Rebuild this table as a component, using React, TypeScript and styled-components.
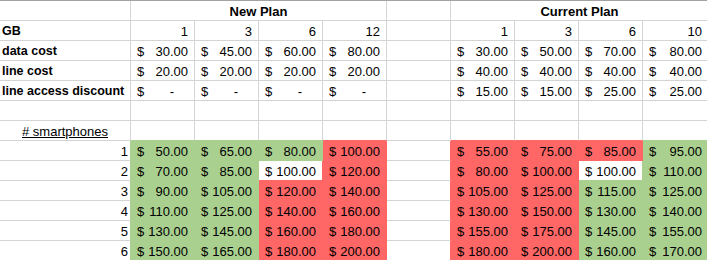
import React from "react";
import styled, { createGlobalStyle, css } from "styled-components";

const GRID = "#d4d4d4";
const FILLS: Record<string, string> = { g: "#a9d08e", r: "#ff6666", w: "#ffffff" };

const GlobalStyle = createGlobalStyle`
  html, body { margin: 0; padding: 0; background: #ffffff; }
  body { overflow: hidden; font-family: "Liberation Sans", Arial, sans-serif; color: #000; }
`;

const Sheet = styled.div`
  display: grid;
  grid-template-columns: 131px repeat(8, 64px) 66px;
  grid-auto-rows: 20px;
  width: 709px;
  border-top: 1px solid #a3a3a3;
`;

type Align = "left" | "right" | "center";

const Cell = styled.div<{
  $align: Align;
  $bold?: boolean;
  $size?: number;
  $fill?: string;
  $right: string;
  $bottom: string;
  $span: number;
  $padR?: number;
  $padL?: number;
  $acct?: boolean;
}>`
  box-sizing: border-box;
  grid-column: span ${(p) => p.$span};
  border-right: 1px solid ${(p) => p.$right};
  border-bottom: 1px solid ${(p) => p.$bottom};
  background: ${(p) => p.$fill || "transparent"};
  padding: 2px ${(p) => p.$padR ?? 2}px 0 ${(p) => p.$padL ?? 2}px;
  line-height: 17px;
  font-size: ${(p) => p.$size ?? 13}px;
  font-weight: ${(p) => (p.$bold ? 700 : 400)};
  text-align: ${(p) => p.$align};
  white-space: nowrap;
  overflow: hidden;
  ${(p) =>
    p.$acct &&
    css`
      display: flex;
      justify-content: space-between;
    `}
`;

const Underlined = styled.span`
  text-decoration: underline;
  text-underline-offset: 1px;
`;

const Sym = styled.span``;
const Num = styled.span``;
const Dash = styled.span`
  padding-right: 14px;
`;

type Spec = {
  kind: "empty" | "text" | "num" | "acct" | "dash" | "header" | "under";
  text?: string;
  fill?: "g" | "r" | "w";
  span?: number;
  bold?: boolean;
  align?: Align;
  padR?: number;
};

const E: Spec = { kind: "empty" };
const label = (t: string): Spec => ({ kind: "text", text: t, bold: true, align: "left" });
const num = (n: number): Spec => ({ kind: "num", text: String(n), align: "right", padR: 6 });
const acct = (n: number, fill?: "g" | "r" | "w"): Spec => ({
  kind: "acct",
  text: n.toFixed(2),
  fill,
});
const dash: Spec = { kind: "dash" };

const newPlan = [
  [[50, "g"], [65, "g"], [80, "g"], [100, "r"]],
  [[70, "g"], [85, "g"], [100, "w"], [120, "r"]],
  [[90, "g"], [105, "g"], [120, "r"], [140, "r"]],
  [[110, "g"], [125, "g"], [140, "r"], [160, "r"]],
  [[130, "g"], [145, "g"], [160, "r"], [180, "r"]],
  [[150, "g"], [165, "g"], [180, "r"], [200, "r"]],
] as [number, "g" | "r" | "w"][][];

const curPlan = [
  [[55, "r"], [75, "r"], [85, "r"], [95, "g"]],
  [[80, "r"], [100, "r"], [100, "w"], [110, "g"]],
  [[105, "r"], [125, "r"], [115, "g"], [125, "g"]],
  [[130, "r"], [150, "r"], [130, "g"], [140, "g"]],
  [[155, "r"], [175, "r"], [145, "g"], [155, "g"]],
  [[180, "r"], [200, "r"], [160, "g"], [170, "g"]],
] as [number, "g" | "r" | "w"][][];

const rows: Spec[][] = [
  [
    E,
    { kind: "header", text: "New Plan", span: 4, bold: true, align: "center" },
    E,
    { kind: "header", text: "Current Plan", span: 4, bold: true, align: "center" },
  ],
  [label("GB"), num(1), num(3), num(6), num(12), E, num(1), num(3), num(6), num(10)],
  [label("data cost"), acct(30), acct(45), acct(60), acct(80), E, acct(30), acct(50), acct(70), acct(80)],
  [label("line cost"), acct(20), acct(20), acct(20), acct(20), E, acct(40), acct(40), acct(40), acct(40)],
  [label("line access discount"), dash, dash, dash, dash, E, acct(15), acct(15), acct(25), acct(25)],
  [E, E, E, E, E, E, E, E, E, E],
  [{ kind: "under", text: "# smartphones", align: "center" }, E, E, E, E, E, E, E, E, E],
  ...newPlan.map((np, i) => [
    { kind: "num", text: String(i + 1), align: "right", padR: 2 } as Spec,
    ...np.map(([v, f]) => acct(v, f)),
    E,
    ...curPlan[i].map(([v, f]) => acct(v, f)),
  ]),
];

// map each row to column positions
const colMaps = rows.map((row) => {
  const map: (Spec | null)[] = [];
  row.forEach((s) => {
    const span = s.span ?? 1;
    for (let k = 0; k < span; k++) map.push(s);
  });
  return map;
});

const strongFill = (s?: Spec | null) =>
  s && (s.fill === "g" || s.fill === "r") ? FILLS[s.fill] : null;

function renderContent(s: Spec) {
  switch (s.kind) {
    case "acct":
      return (
        <>
          <Sym>$</Sym>
          <Num>{s.text}</Num>
        </>
      );
    case "dash":
      return (
        <>
          <Sym>$</Sym>
          <Dash>-</Dash>
        </>
      );
    case "under":
      return <Underlined>{s.text}</Underlined>;
    case "empty":
      return null;
    default:
      return s.text;
  }
}

export default function App() {
  return (
    <>
      <GlobalStyle />
      <Sheet>
        {rows.map((row, r) => {
          let col = 0;
          return row.map((s, i) => {
            const span = s.span ?? 1;
            const c = col;
            col += span;
            const own = strongFill(s);
            const rightN = colMaps[r][c + span];
            const bottomN = colMaps[r + 1]?.[c];
            const right = own || strongFill(rightN) || GRID;
            const bottom = own || strongFill(bottomN) || GRID;
            const isAcct = s.kind === "acct" || s.kind === "dash";
            return (
              <Cell
                key={`${r}-${i}`}
                $span={span}
                $align={s.align ?? "left"}
                $bold={s.bold}
                $size={s.kind === "text" ? 12.5 : 13}
                $fill={s.fill ? FILLS[s.fill] : undefined}
                $right={right}
                $bottom={bottom}
                $acct={isAcct}
                $padL={isAcct ? 6 : 2}
                $padR={isAcct ? 6 : s.padR ?? 2}
              >
                {renderContent(s)}
              </Cell>
            );
          });
        })}
      </Sheet>
    </>
  );
}
